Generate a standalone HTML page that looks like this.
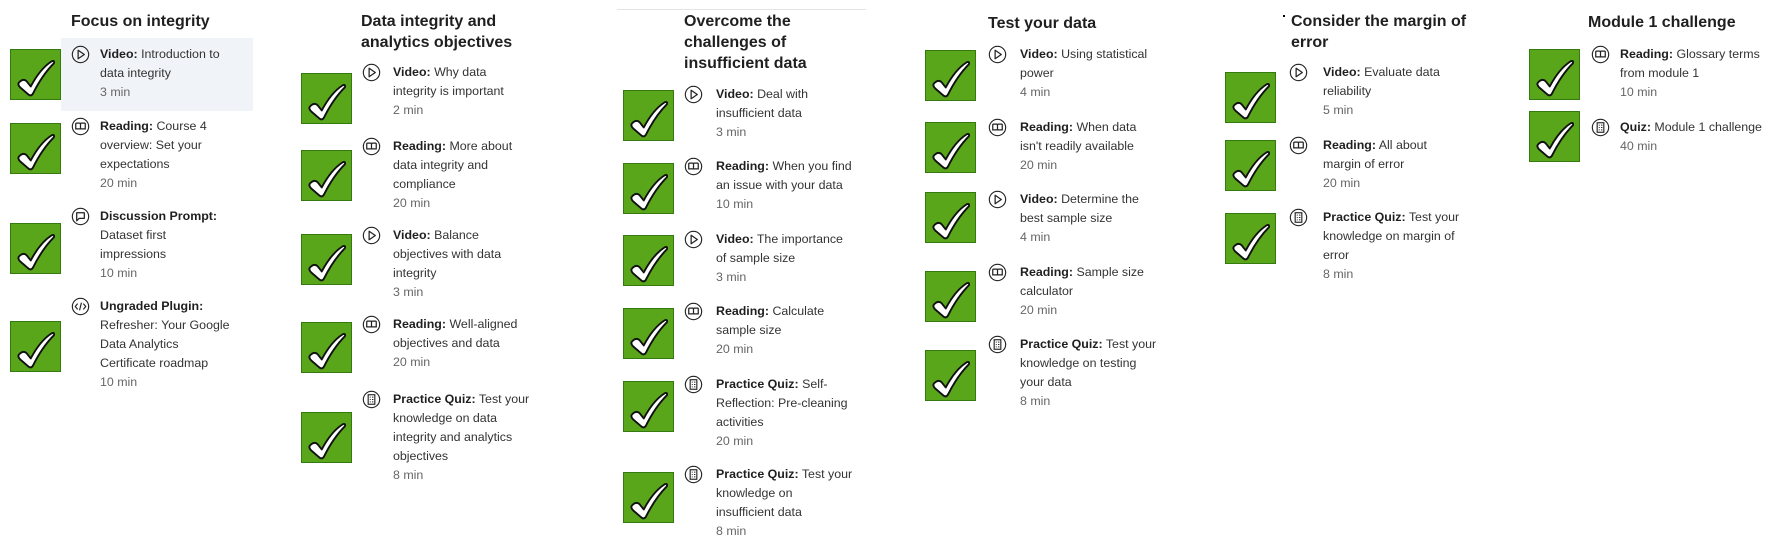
<!DOCTYPE html>
<html><head><meta charset="utf-8"><style>
body{margin:0;width:1781px;height:551px;background:#fff;position:relative;overflow:hidden;font-family:"Liberation Sans",sans-serif;color:#333}
.h{position:absolute;font-weight:bold;font-size:16px;line-height:21px;color:#1f1f1f}
.c{position:absolute;width:49px;height:49px;background:#5aa61a;border:1px solid #347a10}
.c svg{position:absolute;left:4px;top:6px}
.i{position:absolute;width:19px;height:19px}
.t{position:absolute;font-size:12.4px;line-height:19px;color:#333;white-space:nowrap}
.t b{color:#1f1f1f}
.t .m{color:#666}
.hl{position:absolute;left:61px;top:38px;width:192px;height:73px;background:#f0f4f8}
</style></head><body>
<svg width="0" height="0" style="position:absolute">
<defs>
<symbol id="ck" viewBox="0 0 40 40"><path d="M4 25 Q8 21 11 24 L15 29 Q24 12 35 5 Q38 4 37 7 Q26 18 17 36 Q15 39 12 36 L5 30 Q2 27 4 25Z" fill="#fff" stroke="#111" stroke-width="1.8" stroke-linejoin="round"/></symbol>
<symbol id="pl" viewBox="0 0 20 20"><circle cx="10" cy="10" r="8.6" fill="none" stroke="#222" stroke-width="1.2"/><path d="M7.5 5.5 L14 10 L7.5 14.5Z" fill="none" stroke="#222" stroke-width="1.3" stroke-linejoin="round"/></symbol>
<symbol id="bk" viewBox="0 0 20 20"><circle cx="10" cy="10" r="8.6" fill="none" stroke="#222" stroke-width="1.2"/><path d="M5 6.5 H9 Q10 6.5 10 7.5 V13 M15 6.5 H11 Q10 6.5 10 7.5 M5 6.5 V12.5 H10 H15 V6.5" fill="none" stroke="#222" stroke-width="1.3"/></symbol>
<symbol id="ds" viewBox="0 0 20 20"><circle cx="10" cy="10" r="8.6" fill="none" stroke="#222" stroke-width="1.2"/><path d="M6 6 H14 V12 H8.5 L6 14.5Z" fill="none" stroke="#222" stroke-width="1.3" stroke-linejoin="round"/></symbol>
<symbol id="cd" viewBox="0 0 20 20"><circle cx="10" cy="10" r="8.6" fill="none" stroke="#222" stroke-width="1.2"/><path d="M7 7 L4.5 10 L7 13 M13 7 L15.5 10 L13 13 M11 6 L9 14" fill="none" stroke="#222" stroke-width="1.2"/></symbol>
<symbol id="qz" viewBox="0 0 20 20"><circle cx="10" cy="10" r="8.6" fill="none" stroke="#222" stroke-width="1.2"/><rect x="6.5" y="5" width="7" height="10" fill="none" stroke="#222" stroke-width="1.2"/><path d="M8.2 7.5h1M10.5 7.5h1.5M8.2 10h1M10.5 10h1.5M8.2 12.5h1M10.5 12.5h1.5" stroke="#222" stroke-width="1"/></symbol>
</defs></svg>

<div class="hl"></div>
<div style="position:absolute;left:617px;top:9px;width:249px;height:1px;background:#e4e4e4"></div>
<div style="position:absolute;left:1283px;top:15px;width:2px;height:2px;background:#000"></div>

<!-- Column 1 -->
<div class="h" style="left:71px;top:11px">Focus on integrity</div>
<div class="c" style="left:10px;top:49px"><svg width="42" height="42"><use href="#ck"/></svg></div>
<svg class="i" style="left:71px;top:45px"><use href="#pl"/></svg>
<div class="t" style="left:100px;top:45px"><b>Video:</b> Introduction to<br>data integrity<br><span class="m">3 min</span></div>
<div class="c" style="left:10px;top:123px"><svg width="42" height="42"><use href="#ck"/></svg></div>
<svg class="i" style="left:71px;top:117px"><use href="#bk"/></svg>
<div class="t" style="left:100px;top:117px"><b>Reading:</b> Course 4<br>overview: Set your<br>expectations<br><span class="m">20 min</span></div>
<div class="c" style="left:10px;top:223px"><svg width="42" height="42"><use href="#ck"/></svg></div>
<svg class="i" style="left:71px;top:207px"><use href="#ds"/></svg>
<div class="t" style="left:100px;top:207px"><b>Discussion Prompt:</b><br>Dataset first<br>impressions<br><span class="m">10 min</span></div>
<div class="c" style="left:10px;top:321px"><svg width="42" height="42"><use href="#ck"/></svg></div>
<svg class="i" style="left:71px;top:297px"><use href="#cd"/></svg>
<div class="t" style="left:100px;top:297px"><b>Ungraded Plugin:</b><br>Refresher: Your Google<br>Data Analytics<br>Certificate roadmap<br><span class="m">10 min</span></div>

<!-- Column 2 -->
<div class="h" style="left:361px;top:11px">Data integrity and<br>analytics objectives</div>
<div class="c" style="left:301px;top:73px"><svg width="42" height="42"><use href="#ck"/></svg></div>
<svg class="i" style="left:362px;top:63px"><use href="#pl"/></svg>
<div class="t" style="left:393px;top:63px"><b>Video:</b> Why data<br>integrity is important<br><span class="m">2 min</span></div>
<div class="c" style="left:301px;top:150px"><svg width="42" height="42"><use href="#ck"/></svg></div>
<svg class="i" style="left:362px;top:137px"><use href="#bk"/></svg>
<div class="t" style="left:393px;top:137px"><b>Reading:</b> More about<br>data integrity and<br>compliance<br><span class="m">20 min</span></div>
<div class="c" style="left:301px;top:234px"><svg width="42" height="42"><use href="#ck"/></svg></div>
<svg class="i" style="left:362px;top:226px"><use href="#pl"/></svg>
<div class="t" style="left:393px;top:226px"><b>Video:</b> Balance<br>objectives with data<br>integrity<br><span class="m">3 min</span></div>
<div class="c" style="left:301px;top:322px"><svg width="42" height="42"><use href="#ck"/></svg></div>
<svg class="i" style="left:362px;top:315px"><use href="#bk"/></svg>
<div class="t" style="left:393px;top:315px"><b>Reading:</b> Well-aligned<br>objectives and data<br><span class="m">20 min</span></div>
<div class="c" style="left:301px;top:412px"><svg width="42" height="42"><use href="#ck"/></svg></div>
<svg class="i" style="left:362px;top:390px"><use href="#qz"/></svg>
<div class="t" style="left:393px;top:390px"><b>Practice Quiz:</b> Test your<br>knowledge on data<br>integrity and analytics<br>objectives<br><span class="m">8 min</span></div>

<!-- Column 3 -->
<div class="h" style="left:684px;top:11px">Overcome the<br>challenges of<br>insufficient data</div>
<div class="c" style="left:623px;top:90px"><svg width="42" height="42"><use href="#ck"/></svg></div>
<svg class="i" style="left:684px;top:85px"><use href="#pl"/></svg>
<div class="t" style="left:716px;top:85px"><b>Video:</b> Deal with<br>insufficient data<br><span class="m">3 min</span></div>
<div class="c" style="left:623px;top:163px"><svg width="42" height="42"><use href="#ck"/></svg></div>
<svg class="i" style="left:684px;top:157px"><use href="#bk"/></svg>
<div class="t" style="left:716px;top:157px"><b>Reading:</b> When you find<br>an issue with your data<br><span class="m">10 min</span></div>
<div class="c" style="left:623px;top:235px"><svg width="42" height="42"><use href="#ck"/></svg></div>
<svg class="i" style="left:684px;top:230px"><use href="#pl"/></svg>
<div class="t" style="left:716px;top:230px"><b>Video:</b> The importance<br>of sample size<br><span class="m">3 min</span></div>
<div class="c" style="left:623px;top:308px"><svg width="42" height="42"><use href="#ck"/></svg></div>
<svg class="i" style="left:684px;top:302px"><use href="#bk"/></svg>
<div class="t" style="left:716px;top:302px"><b>Reading:</b> Calculate<br>sample size<br><span class="m">20 min</span></div>
<div class="c" style="left:623px;top:381px"><svg width="42" height="42"><use href="#ck"/></svg></div>
<svg class="i" style="left:684px;top:375px"><use href="#qz"/></svg>
<div class="t" style="left:716px;top:375px"><b>Practice Quiz:</b> Self-<br>Reflection: Pre-cleaning<br>activities<br><span class="m">20 min</span></div>
<div class="c" style="left:623px;top:472px"><svg width="42" height="42"><use href="#ck"/></svg></div>
<svg class="i" style="left:684px;top:465px"><use href="#qz"/></svg>
<div class="t" style="left:716px;top:465px"><b>Practice Quiz:</b> Test your<br>knowledge on<br>insufficient data<br><span class="m">8 min</span></div>

<!-- Column 4 -->
<div class="h" style="left:988px;top:13px">Test your data</div>
<div class="c" style="left:925px;top:50px"><svg width="42" height="42"><use href="#ck"/></svg></div>
<svg class="i" style="left:988px;top:45px"><use href="#pl"/></svg>
<div class="t" style="left:1020px;top:45px"><b>Video:</b> Using statistical<br>power<br><span class="m">4 min</span></div>
<div class="c" style="left:925px;top:122px"><svg width="42" height="42"><use href="#ck"/></svg></div>
<svg class="i" style="left:988px;top:118px"><use href="#bk"/></svg>
<div class="t" style="left:1020px;top:118px"><b>Reading:</b> When data<br>isn't readily available<br><span class="m">20 min</span></div>
<div class="c" style="left:925px;top:192px"><svg width="42" height="42"><use href="#ck"/></svg></div>
<svg class="i" style="left:988px;top:190px"><use href="#pl"/></svg>
<div class="t" style="left:1020px;top:190px"><b>Video:</b> Determine the<br>best sample size<br><span class="m">4 min</span></div>
<div class="c" style="left:925px;top:271px"><svg width="42" height="42"><use href="#ck"/></svg></div>
<svg class="i" style="left:988px;top:263px"><use href="#bk"/></svg>
<div class="t" style="left:1020px;top:263px"><b>Reading:</b> Sample size<br>calculator<br><span class="m">20 min</span></div>
<div class="c" style="left:925px;top:350px"><svg width="42" height="42"><use href="#ck"/></svg></div>
<svg class="i" style="left:988px;top:335px"><use href="#qz"/></svg>
<div class="t" style="left:1020px;top:335px"><b>Practice Quiz:</b> Test your<br>knowledge on testing<br>your data<br><span class="m">8 min</span></div>

<!-- Column 5 -->
<div class="h" style="left:1291px;top:11px">Consider the margin of<br>error</div>
<div class="c" style="left:1225px;top:72px"><svg width="42" height="42"><use href="#ck"/></svg></div>
<svg class="i" style="left:1289px;top:63px"><use href="#pl"/></svg>
<div class="t" style="left:1323px;top:63px"><b>Video:</b> Evaluate data<br>reliability<br><span class="m">5 min</span></div>
<div class="c" style="left:1225px;top:140px"><svg width="42" height="42"><use href="#ck"/></svg></div>
<svg class="i" style="left:1289px;top:136px"><use href="#bk"/></svg>
<div class="t" style="left:1323px;top:136px"><b>Reading:</b> All about<br>margin of error<br><span class="m">20 min</span></div>
<div class="c" style="left:1225px;top:213px"><svg width="42" height="42"><use href="#ck"/></svg></div>
<svg class="i" style="left:1289px;top:208px"><use href="#qz"/></svg>
<div class="t" style="left:1323px;top:208px"><b>Practice Quiz:</b> Test your<br>knowledge on margin of<br>error<br><span class="m">8 min</span></div>

<!-- Column 6 -->
<div class="h" style="left:1588px;top:12px">Module 1 challenge</div>
<div class="c" style="left:1529px;top:49px"><svg width="42" height="42"><use href="#ck"/></svg></div>
<svg class="i" style="left:1591px;top:45px"><use href="#bk"/></svg>
<div class="t" style="left:1620px;top:45px"><b>Reading:</b> Glossary terms<br>from module 1<br><span class="m">10 min</span></div>
<div class="c" style="left:1529px;top:111px"><svg width="42" height="42"><use href="#ck"/></svg></div>
<svg class="i" style="left:1591px;top:118px"><use href="#qz"/></svg>
<div class="t" style="left:1620px;top:118px"><b>Quiz:</b> Module 1 challenge<br><span class="m">40 min</span></div>
</body></html>
